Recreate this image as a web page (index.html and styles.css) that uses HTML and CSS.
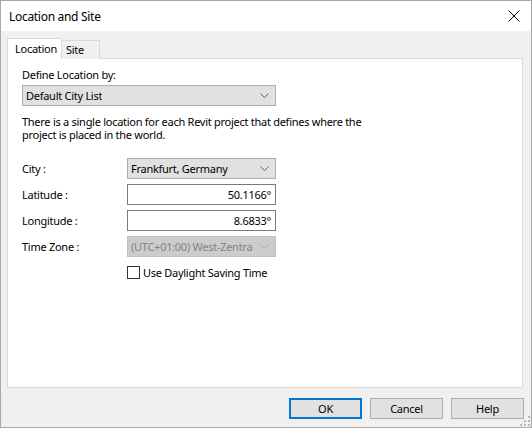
FILE: index.html
```html
<!DOCTYPE html>
<html>
<head>
<meta charset="utf-8">
<link rel="stylesheet" href="styles.css">
</head>
<body>
<div class="window">
  <div class="titlebar">
    <span class="title">Location and Site</span>
    <svg class="close" width="12" height="12" viewBox="0 0 12 12"><path d="M0.5 0.5 L11.5 11.5 M11.5 0.5 L0.5 11.5" stroke="#000" stroke-width="1" fill="none"/></svg>
  </div>
  <div class="client">
    <div class="tabs">
      <div class="tab active">Location</div>
      <div class="tab">Site</div>
    </div>
    <div class="panel">
      <div class="label-top">Define Location by:</div>
      <div class="combo wide"><span>Default City List</span><svg class="chev" width="9" height="5" viewBox="0 0 9 5"><path d="M0.5 0.5 L4.5 4.5 L8.5 0.5" stroke="#606060" fill="none"/></svg></div>
      <p class="desc">There is a single location for each Revit project that defines where the<br>project is placed in the world.</p>
      <div class="form">
        <div class="lbl">City :</div>
        <div class="combo"><span>Frankfurt, Germany</span><svg class="chev" width="9" height="5" viewBox="0 0 9 5"><path d="M0.5 0.5 L4.5 4.5 L8.5 0.5" stroke="#606060" fill="none"/></svg></div>
        <div class="lbl">Latitude :</div>
        <div class="input">50.1166°</div>
        <div class="lbl">Longitude :</div>
        <div class="input">8.6833°</div>
        <div class="lbl">Time Zone :</div>
        <div class="combo disabled"><span class="clip">(UTC+01:00) West-Zentra</span><svg class="chev" width="9" height="5" viewBox="0 0 9 5"><path d="M0.5 0.5 L4.5 4.5 L8.5 0.5" stroke="#a8a8a8" fill="none"/></svg></div>
        <div></div>
        <label class="check"><span class="box"></span>Use Daylight Saving Time</label>
      </div>
    </div>
    <div class="buttons">
      <div class="btn default">OK</div>
      <div class="btn">Cancel</div>
      <div class="btn">Help</div>
    </div>
    <svg class="grip" width="10" height="10" viewBox="0 0 10 10">
      <rect x="8" y="0" width="2" height="2" fill="#b8b8b8"/>
      <rect x="4" y="4" width="2" height="2" fill="#b8b8b8"/>
      <rect x="8" y="4" width="2" height="2" fill="#b8b8b8"/>
      <rect x="0" y="8" width="2" height="2" fill="#b8b8b8"/>
      <rect x="4" y="8" width="2" height="2" fill="#b8b8b8"/>
      <rect x="8" y="8" width="2" height="2" fill="#b8b8b8"/>
    </svg>
  </div>
</div>
</body>
</html>
```
FILE: styles.css
```css
html, body {
  margin: 0;
  padding: 0;
}
body {
  font-family: "Noto Sans", "Liberation Sans", sans-serif;
  font-size: 11px;
  letter-spacing: -0.27px;
  color: #000;
}
.window {
  width: 530px;
  height: 426px;
  border: 1px solid #a8a8a8;
  display: flex;
  flex-direction: column;
  background: #f0f0f0;
}
.titlebar {
  height: 30px;
  background: #fff;
  display: flex;
  align-items: center;
  justify-content: space-between;
  padding: 0 9px 0 8px;
  flex: none;
}
.title {
  font-size: 12px;
  letter-spacing: -0.3px;
}
.close {
  margin-right: 2px;
}
.client {
  flex: 1;
  position: relative;
  padding: 7px 8px 0 6px;
  display: flex;
  flex-direction: column;
}
.tabs {
  display: flex;
  align-items: flex-end;
  height: 21px;
  position: relative;
  z-index: 1;
  margin-bottom: -1px;
}
.tab {
  line-height: 18px;
  border: 1px solid #d9d9d9;
  border-bottom: none;
  background: #f0f0f0;
  box-sizing: border-box;
  height: 19px;
  padding-left: 4px;
  width: 39px;
  margin-left: -1px;
}
.tab.active {
  background: #fff;
  height: 21px;
  line-height: 19px;
  width: 55px;
  margin-left: 0;
  padding-left: 7px;
  position: relative;
  z-index: 2;
}
.panel {
  height: 330px;
  box-sizing: border-box;
  border: 1px solid #d9d9d9;
  background: #fff;
  padding: 8px 14px 0 14px;
}
.label-top {
  line-height: 15px;
  height: 18px;
}
.combo {
  height: 21px;
  box-sizing: border-box;
  border: 1px solid #adadad;
  background: #e1e1e1;
  display: flex;
  align-items: center;
  justify-content: space-between;
  padding: 0 6px 0 3px;
  width: 149px;
  white-space: nowrap;
  overflow: hidden;
}
.combo.wide {
  width: 254px;
}
.combo span {
  overflow: hidden;
}
.combo .clip {
  flex: 1;
  min-width: 0;
}
.chev {
  flex: none;
  margin-left: 4px;
}
.combo.disabled {
  background: #cccccc;
  border-color: #bfbfbf;
  color: #838383;
}
.desc {
  margin: 9px 0 0 0;
  line-height: 13px;
  height: 43px;
}
.form {
  display: grid;
  grid-template-columns: 105px 149px;
  grid-template-rows: 21px 21px 21px 21px 21px;
  row-gap: 5px;
  align-items: center;
}
.lbl {
  line-height: 21px;
}
.input {
  height: 21px;
  box-sizing: border-box;
  border: 1px solid #7a7a7a;
  background: #fff;
  text-align: right;
  padding: 0 4px;
  line-height: 19px;
}
.check {
  display: flex;
  align-items: center;
  height: 21px;
}
.box {
  width: 13px;
  height: 13px;
  box-sizing: border-box;
  border: 1px solid #333;
  background: #fff;
  margin-right: 3px;
}
.buttons {
  display: flex;
  justify-content: flex-end;
  gap: 8px;
  padding-top: 10px;
  margin-right: -1px;
}
.btn {
  width: 73px;
  height: 21px;
  box-sizing: border-box;
  border: 1px solid #adadad;
  background: #e1e1e1;
  text-align: center;
  line-height: 19px;
}
.btn.default {
  border: 2px solid #0078d7;
  line-height: 17px;
}
.grip {
  position: absolute;
  right: 1px;
  bottom: 1px;
}
```
